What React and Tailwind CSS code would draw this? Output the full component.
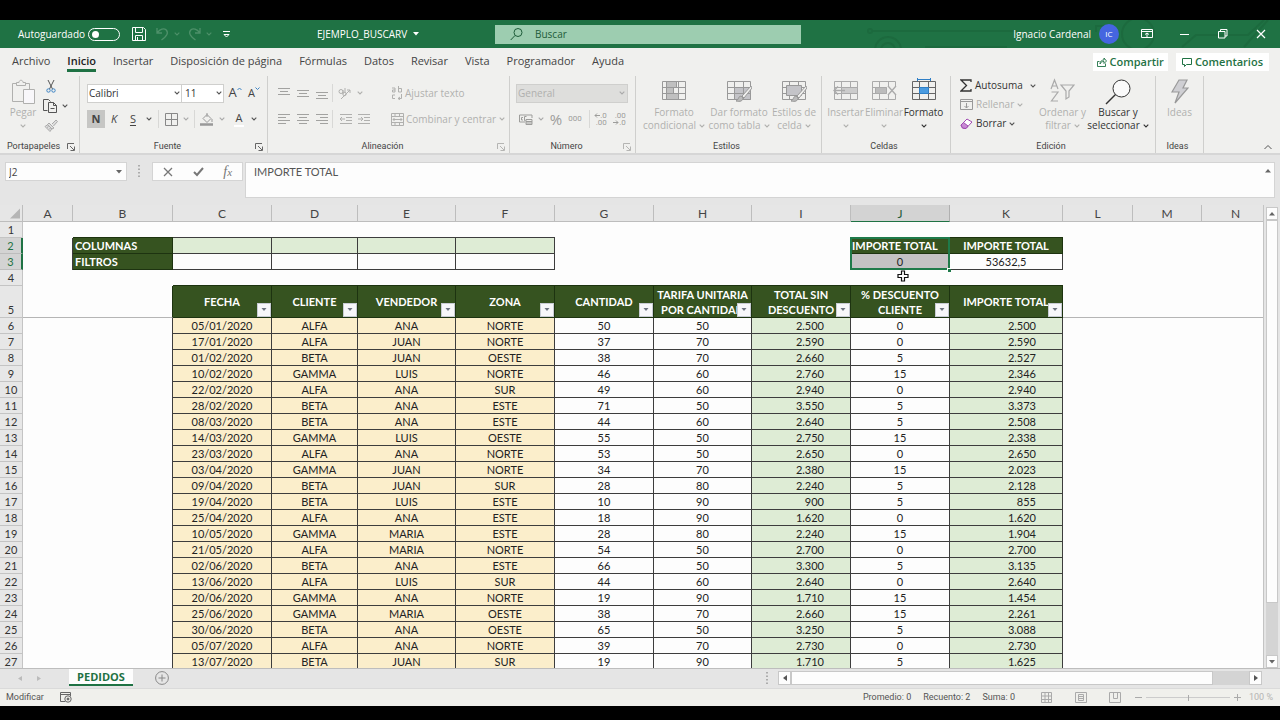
import React from 'react';

const HEADERS = [
  ['FECHA'],
  ['CLIENTE'],
  ['VENDEDOR'],
  ['ZONA'],
  ['CANTIDAD'],
  ['TARIFA UNITARIA', 'POR CANTIDAD'],
  ['TOTAL SIN', 'DESCUENTO'],
  ['% DESCUENTO', 'CLIENTE'],
  ['IMPORTE TOTAL'],
];

const ROWS = [
  ['05/01/2020', 'ALFA', 'ANA', 'NORTE', '50', '50', '2.500', '0', '2.500'],
  ['17/01/2020', 'ALFA', 'JUAN', 'NORTE', '37', '70', '2.590', '0', '2.590'],
  ['01/02/2020', 'BETA', 'JUAN', 'OESTE', '38', '70', '2.660', '5', '2.527'],
  ['10/02/2020', 'GAMMA', 'LUIS', 'NORTE', '46', '60', '2.760', '15', '2.346'],
  ['22/02/2020', 'ALFA', 'ANA', 'SUR', '49', '60', '2.940', '0', '2.940'],
  ['28/02/2020', 'BETA', 'ANA', 'ESTE', '71', '50', '3.550', '5', '3.373'],
  ['08/03/2020', 'BETA', 'ANA', 'ESTE', '44', '60', '2.640', '5', '2.508'],
  ['14/03/2020', 'GAMMA', 'LUIS', 'OESTE', '55', '50', '2.750', '15', '2.338'],
  ['23/03/2020', 'ALFA', 'ANA', 'NORTE', '53', '50', '2.650', '0', '2.650'],
  ['03/04/2020', 'GAMMA', 'JUAN', 'NORTE', '34', '70', '2.380', '15', '2.023'],
  ['09/04/2020', 'BETA', 'JUAN', 'SUR', '28', '80', '2.240', '5', '2.128'],
  ['19/04/2020', 'BETA', 'LUIS', 'ESTE', '10', '90', '900', '5', '855'],
  ['25/04/2020', 'ALFA', 'ANA', 'ESTE', '18', '90', '1.620', '0', '1.620'],
  ['10/05/2020', 'GAMMA', 'MARIA', 'ESTE', '28', '80', '2.240', '15', '1.904'],
  ['21/05/2020', 'ALFA', 'MARIA', 'NORTE', '54', '50', '2.700', '0', '2.700'],
  ['02/06/2020', 'BETA', 'ANA', 'ESTE', '66', '50', '3.300', '5', '3.135'],
  ['13/06/2020', 'ALFA', 'LUIS', 'SUR', '44', '60', '2.640', '0', '2.640'],
  ['20/06/2020', 'GAMMA', 'ANA', 'NORTE', '19', '90', '1.710', '15', '1.454'],
  ['25/06/2020', 'GAMMA', 'MARIA', 'OESTE', '38', '70', '2.660', '15', '2.261'],
  ['30/06/2020', 'BETA', 'ANA', 'OESTE', '65', '50', '3.250', '5', '3.088'],
  ['05/07/2020', 'ALFA', 'ANA', 'NORTE', '39', '70', '2.730', '0', '2.730'],
  ['13/07/2020', 'BETA', 'JUAN', 'SUR', '19', '90', '1.710', '5', '1.625'],
];

const COLUMN_STYLE = [
  'bg-[#fbeecb] text-center',
  'bg-[#fbeecb] text-center',
  'bg-[#fbeecb] text-center',
  'bg-[#fbeecb] text-center',
  'text-center',
  'text-center',
  'bg-[#deecd5] text-right pr-[26px]',
  'text-center',
  'bg-[#deecd5] text-right pr-[26px]',
];

function Chev({ className = 'text-[#555]' }) {
  return (
    <svg className={`inline-block h-[4px] w-[6px] shrink-0 ${className}`} viewBox="0 0 6 4" fill="none" stroke="currentColor" strokeWidth="1.1" aria-hidden="true">
      <path d="M.7.7 3 3 5.3.7" />
    </svg>
  );
}

function Caret({ className = 'text-[#666]', d = 'M0 0h6L3 3.5z' }) {
  return (
    <svg className={`h-[4px] w-[6px] shrink-0 ${className}`} viewBox="0 0 6 4" fill="currentColor" aria-hidden="true">
      <path d={d} />
    </svg>
  );
}

function Icon({ w, h, className = '', children, sw = 1 }) {
  return (
    <svg width={w} height={h} viewBox={`0 0 ${w} ${h}`} className={`shrink-0 ${className}`} fill="none" stroke="currentColor" strokeWidth={sw} aria-hidden="true">
      {children}
    </svg>
  );
}

function Launcher({ off }) {
  return (
    <button aria-label="Más opciones" className={off ? 'text-[#b5b5b3]' : 'text-[#666]'}>
      <Icon w={8} h={8}>
        <path d="M.5 6V.5H7M3 3l4 4M7.5 3.5v4h-4" />
      </Icon>
    </button>
  );
}

function Group({ label, launcher, off, className, children }) {
  return (
    <section aria-label={label} className={`flex shrink-0 flex-col border-r border-[#cfcfcd] ${className}`}>
      <div className="h-16">{children}</div>
      <div className="flex h-[13px] items-center pr-1">
        <span className="flex-1 text-center font-[Roboto,sans-serif] text-[9px] text-[#444]">{label}</span>
        {launcher && <Launcher off={off} />}
      </div>
    </section>
  );
}

function BigButton({ icon, lines, chevron = 'below', off = true, className = '' }) {
  const tone = off ? 'text-[#b0b0ae]' : 'text-[#333]';
  return (
    <button className={`flex flex-col items-center pt-[2px] text-[10px] leading-[13px] whitespace-nowrap ${tone} ${className}`}>
      <span className="flex h-7 items-start justify-center">{icon}</span>
      {lines.map((l, i) => (
        <span key={l} className="flex items-center gap-[3px]">
          {l}
          {chevron === 'inline' && i === lines.length - 1 && <Chev className={tone} />}
        </span>
      ))}
      {chevron === 'below' && (
        <span className="flex h-[13px] items-center">
          <Chev className={tone} />
        </span>
      )}
    </button>
  );
}

function Sep() {
  return <span className="h-[18px] w-px bg-[#d8d8d6]" />;
}

function Tool({ label, className = '', children }) {
  return (
    <button aria-label={label} className={`flex h-[18px] shrink-0 items-center justify-center ${className}`}>
      {children}
    </button>
  );
}

function Lines({ rows }) {
  return (
    <Icon w={13} h={13} className="text-[#a2a2a0]">
      {rows.map(([x, y, w]) => (
        <path key={y} d={`M${x} ${y}.5h${w}`} />
      ))}
    </Icon>
  );
}

function GridIcon({ children, className = '' }) {
  return (
    <Icon w={26} h={24} className={className}>
      <path d="M1.5 3.5h23v18h-23zM1.5 9.5h23M1.5 15.5h23M8.5 3.5v18M17.5 3.5v18" />
      {children}
    </Icon>
  );
}

function TitleBar() {
  return (
    <header className="relative flex h-7 shrink-0 items-center bg-[#1f7244] text-[10px] text-white">
      <svg className="absolute top-0 right-0 h-7 w-[420px] text-[#1c6a3e]" viewBox="0 0 420 28" fill="none" stroke="currentColor" strokeWidth="2" aria-hidden="true">
        <path d="M12 11h145M65 27h82M322 27l14-12h52l16-15M384 27l24-27M236 12v-6h14" />
        <circle cx="28" cy="30" r="13" />
        <circle cx="28" cy="30" r="7" />
        <circle cx="278" cy="14" r="16" />
        <circle cx="10" cy="11" r="2" />
      </svg>
      <div className="relative mr-3 flex flex-1 items-center pl-[18px]">
        <span className="w-[70px]">Autoguardado</span>
        <button role="switch" aria-checked="false" aria-label="Autoguardado" className="flex h-[13px] w-8 items-center rounded-full border border-white pl-[3px]">
          <span className="size-[7px] rounded-full bg-white" />
        </button>
        <button aria-label="Guardar" className="ml-3">
          <Icon w={14} h={14}>
            <path d="M.5.5h11l2 2v11H.5zM3.5.5v5h7v-5M3.5 13.5v-5h7v5M5.5 10v3.5" />
          </Icon>
        </button>
        <button aria-label="Deshacer" className="ml-[10px] flex items-center gap-[5px] text-[#4d9069]">
          <Icon w={13} h={14} sw={1.3}>
            <path d="M1 1v5h5M1.4 5.6C4 2 8 1 10 2.8c3 3 1 6-4.5 10.2" />
          </Icon>
          <Chev className="text-[#4d9069]" />
        </button>
        <button aria-label="Rehacer" className="ml-2 flex items-center gap-[5px] text-[#4d9069]">
          <Icon w={13} h={14} sw={1.3}>
            <path d="M12 1v5H7M11.6 5.6C9 2 5 1 3 2.8c-3 3-1 6 4.5 10.2" />
          </Icon>
          <Chev className="text-[#4d9069]" />
        </button>
        <button aria-label="Personalizar barra" className="ml-[11px]">
          <Icon w={7} h={7}>
            <path d="M0 .5h7M1 3.5h5L3.5 6z" />
          </Icon>
        </button>
        <button className="ml-[87px] flex items-center gap-[6px]">
          EJEMPLO_BUSCARV
          <Caret className="text-white" />
        </button>
      </div>
      <label className="relative flex h-[19px] w-[306px] items-center gap-3 bg-[#9dcdb0] pl-[15px] text-[#1d5c39]">
        <Icon w={13} h={13}>
          <circle cx="8" cy="4.5" r="4" />
          <path d="M5 7.5.7 12" />
        </Icon>
        <input aria-label="Buscar" placeholder="Buscar" className="w-full bg-transparent outline-none placeholder:text-[#1d5c39]" />
      </label>
      <div className="relative flex flex-1 items-center justify-end pr-[14px]">
        <span>Ignacio Cardenal</span>
        <span className="ml-2 flex size-5 items-center justify-center rounded-full bg-[#4565e0] text-[8px]">IC</span>
        <button aria-label="Opciones de la cinta" className="ml-[22px]">
          <Icon w={12} h={10}>
            <path d="M.5.5h11v8H.5zM.5 2.5h11M6 8V4M4 5.500 6 4l2 1.500" />
          </Icon>
        </button>
        <button aria-label="Minimizar" className="ml-[27px]">
          <Icon w={10} h={10}>
            <path d="M0 5.5h9" />
          </Icon>
        </button>
        <button aria-label="Restaurar" className="ml-7">
          <Icon w={10} h={10}>
            <path d="M.5 2.500h6.500V9H.5zM2.500 2.500V.5H9v6.500H7" />
          </Icon>
        </button>
        <button aria-label="Cerrar" className="ml-7">
          <Icon w={10} h={10} sw={1.2}>
            <path d="m1 1 8 8M9 1 1 9" />
          </Icon>
        </button>
      </div>
    </header>
  );
}

function TabBar() {
  const tabs = ['Archivo', 'Inicio', 'Insertar', 'Disposición de página', 'Fórmulas', 'Datos', 'Revisar', 'Vista', 'Programador', 'Ayuda'];
  return (
    <nav className="flex h-7 shrink-0 items-center bg-[#f0f0ee] pl-3 text-[11px] text-[#444]">
      <div className="flex flex-1 gap-[17px] self-stretch">
        {tabs.map((t) => (
          <a key={t} href="#" className={t === 'Inicio' ? 'mb-1 border-b-[3px] border-[#1f7244] pt-[5px] leading-4 font-semibold text-[#222]' : 'pt-[5px] leading-4'}>
            {t}
          </a>
        ))}
      </div>
      <div className="flex gap-2 pr-[11px] font-semibold text-[#1f7244]">
        <button className="flex h-[18px] items-center gap-[3px] bg-white px-1">
          <Icon w={10} h={10}>
            <path d="M2.5 4.500h-2v5h8v-3M3 7c0-3 2-4 4-4V1l2.500 3L7 6.500v-2C5 4.500 4 5 3 7z" strokeWidth=".9" />
          </Icon>
          Compartir
        </button>
        <button className="flex h-[18px] items-center gap-[3px] bg-white px-[6px]">
          <Icon w={10} h={10}>
            <path d="M.5 1.500h9v6h-5l-2 2v-2h-2z" />
          </Icon>
          Comentarios
        </button>
      </div>
    </nav>
  );
}

function Ribbon() {
  return (
    <div className="flex h-[77px] shrink-0 bg-[#f0f0ee]">
      <Group label="Portapapeles" launcher className="w-20">
        <div className="flex">
          <BigButton
            className="w-[42px] pl-1"
            lines={['Pegar']}
            icon={
              <Icon w={24} h={28}>
                <path d="M5 5.5H1.500v18H12M14 5.500h4.500V11M5.500 7.500v-3H8c0-3 4-3 4 0h2.500v3z" />
                <path d="M12.500 11.500h11v14h-11z" fill="#f8f7fa" />
              </Icon>
            }
          />
          <div className="flex flex-col gap-px pt-[2px] pl-px text-[#555]">
            <Tool label="Cortar" className="w-4">
              <Icon w={10} h={14}>
                <path d="m2 0 4.500 9M8 0 3.500 9" />
                <circle cx="2.500" cy="10.500" r="1.700" stroke="#3c83c4" />
                <circle cx="7.500" cy="10.500" r="1.700" stroke="#3c83c4" />
              </Icon>
            </Tool>
            <Tool label="Copiar" className="w-[25px] gap-[5px]">
              <Icon w={14} h={14}>
                <path d="M4.500 11.500h-4V.5h5l2 2M5.500 3.500h5l3 3v7h-8zM10.500 3.500v3h3M7.500 9.500h4" />
              </Icon>
              <Chev />
            </Tool>
            <Tool label="Copiar formato" className="w-4 text-[#aaa]">
              <Icon w={14} h={13}>
                <path d="m8 5 4-4 1.500 1.500L9.500 7M5 4l5 5-2 1-4.500-4.500zM4 5.500 1 7.500l5 5 2-3M3 8.500l1.500-1M5 10.500 6.500 9" fill="#ddd" />
              </Icon>
            </Tool>
          </div>
        </div>
      </Group>

      <Group label="Fuente" launcher className="w-[188px]">
        <div className="flex flex-col gap-2 pt-2 pl-[7px] text-[#444]">
          <div className="flex h-[18px] items-center text-[10px]">
            <span className="relative flex items-center">
              <select aria-label="Fuente" className="h-[19px] w-[95px] appearance-none border border-[#cfcfcd] bg-white pl-px text-[#333]">
                <option>Calibri</option>
              </select>
              <span className="pointer-events-none absolute right-[2px] flex"><Chev /></span>
            </span>
            <span className="relative flex items-center">
              <select aria-label="Tamaño de fuente" className="h-[19px] w-[42px] appearance-none border border-l-0 border-[#cfcfcd] bg-white pl-[3px] text-[#333]">
                <option>11</option>
              </select>
              <span className="pointer-events-none absolute right-[2px] flex"><Chev /></span>
            </span>
            <Tool label="Aumentar tamaño" className="ml-px w-5 text-[13px]">
              A<span className="mb-2"><Icon w={5} h={4} className="text-[#3c83c4]"><path d="m.5 3 2-2 2 2" /></Icon></span>
            </Tool>
            <Tool label="Disminuir tamaño" className="w-[18px] text-[11px]">
              A<span className="mb-2"><Icon w={5} h={4} className="text-[#3c83c4]"><path d="m.5.5 2 2 2-2" /></Icon></span>
            </Tool>
          </div>
          <div className="flex h-[18px] items-center text-[11px]">
            <Tool label="Negrita" className="w-[18px] bg-[#c6c6c4] font-bold">N</Tool>
            <Tool label="Cursiva" className="w-[18px] italic">K</Tool>
            <Tool label="Subrayado" className="w-5 underline underline-offset-2">S</Tool>
            <Tool label="Tipo de subrayado" className="w-[11px]"><Chev /></Tool>
            <span className="w-1" /><Sep />
            <Tool label="Bordes" className="ml-1 w-4">
              <Icon w={13} h={13} className="text-[#888]"><path d="M.5.5h12v12H.5zM6.500.5v12M.5 6.500h12" /></Icon>
            </Tool>
            <Tool label="Tipo de borde" className="w-[14px]"><Chev className="text-[#aaa]" /></Tool>
            <span className="w-px" /><Sep />
            <Tool label="Relleno" className="ml-1 w-4">
              <Icon w={14} h={13} className="text-[#999]"><path d="m3 5.500 4-4 4 4-4 4zM7 0v4M12 6v3" /><path d="M0 11.500h13" strokeWidth="2.500" /></Icon>
            </Tool>
            <Tool label="Color de relleno" className="w-[14px]"><Chev className="text-[#aaa]" /></Tool>
            <Tool label="Color de fuente" className="ml-[3px] w-[14px]"><span className="border-b-2 border-white px-[2px] leading-[14px]">A</span></Tool>
            <Tool label="Elegir color de fuente" className="w-4"><Chev /></Tool>
          </div>
        </div>
      </Group>

      <Group label="Alineación" launcher off className="w-[242px]">
        <div className="flex pt-2 pl-[7px] text-[10px] text-[#b0b0ae]">
          <div className="flex w-[116px] flex-col gap-2">
            <div className="flex h-[18px] items-center">
              <Tool label="Alinear arriba" className="w-[19px]"><Lines rows={[[0, 1, 12], [2, 4, 8], [0, 7, 12]]} /></Tool>
              <Tool label="Alinear en medio" className="w-[19px]"><Lines rows={[[0, 3, 12], [2, 6, 8], [0, 9, 12]]} /></Tool>
              <Tool label="Alinear abajo" className="w-[19px]"><Lines rows={[[0, 5, 12], [2, 8, 8], [0, 11, 12]]} /></Tool>
              <Sep />
              <Tool label="Orientación" className="w-[34px] gap-[5px]">
                <Icon w={14} h={13}><path d="m3 12 9-9M9 3h3v3" /><circle cx="3" cy="4.500" r="2" /><circle cx="6.500" cy="7" r="1.700" /><path d="M5 3v4M7 1v5" /></Icon>
                <Chev className="text-[#b0b0ae]" />
              </Tool>
            </div>
            <div className="flex h-[18px] items-center">
              <Tool label="Izquierda" className="w-[19px]"><Lines rows={[[0, 1, 12], [0, 4, 8], [0, 7, 12], [0, 10, 8]]} /></Tool>
              <Tool label="Centro" className="w-[19px]"><Lines rows={[[0, 1, 12], [2, 4, 8], [0, 7, 12], [2, 10, 8]]} /></Tool>
              <Tool label="Derecha" className="w-[19px]"><Lines rows={[[0, 1, 12], [4, 4, 8], [0, 7, 12], [4, 10, 8]]} /></Tool>
              <Sep />
              <Tool label="Disminuir sangría" className="ml-1 w-[18px]">
                <Icon w={12} h={12}><path d="M0 1.500h12M6 4.500h6M6 7.500h6M0 10.500h12M0 6h5M2 4 0 6l2 2" /></Icon>
              </Tool>
              <Tool label="Aumentar sangría" className="w-[18px]">
                <Icon w={12} h={12}><path d="M0 1.500h12M6 4.500h6M6 7.500h6M0 10.500h12M0 6h5M3 4l2 2-2 2" /></Icon>
              </Tool>
            </div>
          </div>
          <div className="flex flex-col gap-2">
            <button className="flex h-[18px] items-center gap-[2px]">
              <Icon w={12} h={14}><path d="M1 2h3v4H1.500V4H4M7.500 0v6h3V2.500h-3M4 9H1.500v3.500H4M7 12.500h3.500V8M9 11l-2 1.500L9 14" /></Icon>
              Ajustar texto
            </button>
            <button className="flex h-[18px] items-center gap-[2px] whitespace-nowrap">
              <Icon w={13} h={13}><path d="M.5.5h12v12H.5zM.5 3.500h12M.5 9.500h12M4 .5v3M8.500.5v3M4 9.500v3M8.500 9.500v3M2 6.500h9M3.500 5 2 6.500 3.500 8M9.500 5 11 6.500 9.500 8" /></Icon>
              Combinar y centrar
              <span className="ml-px flex"><Chev className="text-[#b0b0ae]" /></span>
            </button>
          </div>
        </div>
      </Group>

      <Group label="Número" launcher off className="w-[126px]">
        <div className="flex flex-col gap-2 pt-2 pl-[6px] text-[#b0b0ae]">
          <span className="relative flex h-[18px] w-[112px] items-center">
            <select disabled aria-label="Formato de número" className="h-[19px] w-full appearance-none border border-[#cfcfcd] bg-[#dededc] pl-px text-[10px] opacity-100">
              <option>General</option>
            </select>
            <span className="pointer-events-none absolute right-[3px] flex"><Chev className="text-[#aaa]" /></span>
          </span>
          <div className="flex h-[18px] items-center text-[#9d9d9b]">
            <Tool label="Formato de contabilidad" className="w-[30px] gap-[5px]">
              <Icon w={14} h={11}><path d="M13 4V1H.5v7H6M4 3.500H2.500v2.500H4M7.500 2.500h-2v4h1M7 5.500h6v5H7zM7 7.500h6M7 9h6" /></Icon>
              <Chev className="text-[#aaa]" />
            </Tool>
            <Tool label="Porcentaje" className="w-5 text-[15px]">%</Tool>
            <Tool label="Millares" className="w-[18px] font-[Roboto,sans-serif] text-[8px]">000</Tool>
            <span className="w-[5px]" /><Sep />
            <Tool label="Aumentar decimales" className="w-[21px] font-[Roboto,sans-serif] text-[8px] leading-[7px]">
              <span className="flex flex-col items-end">
                <span className="flex items-center"><Icon w={6} h={5}><path d="M6 2.500H1M3 .5l-2 2 2 2" /></Icon>.0</span>
                <span>.00</span>
              </span>
            </Tool>
            <Tool label="Disminuir decimales" className="w-[17px] font-[Roboto,sans-serif] text-[8px] leading-[7px]">
              <span className="flex flex-col items-end">
                <span>.00</span>
                <span className="flex items-center"><Icon w={6} h={5}><path d="M0 2.500h5M3 .5l2 2-2 2" /></Icon>.0</span>
              </span>
            </Tool>
          </div>
        </div>
      </Group>

      <Group label="Estilos" className="w-[186px]">
        <div className="flex">
          <BigButton
            className="w-[72px] pl-1"
            chevron="inline"
            lines={['Formato', 'condicional']}
            icon={<GridIcon className="text-[#999]"><path d="M5.500 3.500h10v6h-10zM5.500 9.500h7v6h-7zM5.500 15.500h12v6h-12z" fill="#c0c0c0" /></GridIcon>}
          />
          <BigButton
            className="w-[62px]"
            chevron="inline"
            lines={['Dar formato', 'como tabla']}
            icon={<GridIcon className="text-[#999]"><path d="M8.500 9.500h16v12h-16z" fill="#c4c4c8" /><path d="M8.500 15.500h16M17.500 9.500v12" /><path d="m25 8-9 10 2 2 8-10z" fill="#f0f0ee" /><path d="M15 18c-3 0-2 4-5 5 4 1 7 0 7-3z" fill="#bbb" /></GridIcon>}
          />
          <BigButton
            className="w-12"
            chevron="inline"
            lines={['Estilos de', 'celda']}
            icon={<GridIcon className="text-[#999]"><path d="M5.500 7.500h15v10h-15z" fill="#c4c4c8" /><path d="m25 8-9 10 2 2 8-10z" fill="#f0f0ee" /><path d="M15 18c-3 0-2 4-5 5 4 1 7 0 7-3z" fill="#bbb" /></GridIcon>}
          />
        </div>
      </Group>

      <Group label="Celdas" className="w-[129px]">
        <div className="flex pl-1">
          <BigButton
            className="w-[39px]"
            lines={['Insertar']}
            icon={<GridIcon className="text-[#aaa]"><path d="M8.500 9.500h16v6h-16z" fill="#ccc" /><path d="M12 12.500H1M5 8.500l-4 4 4 4" strokeWidth="1.300" /></GridIcon>}
          />
          <BigButton
            className="w-[38px]"
            lines={['Eliminar']}
            icon={<GridIcon className="text-[#aaa]"><path d="M15.500 8.500h10v8h-10z" fill="#f0f0ee" stroke="none" /><path d="M4.500 9.500h11v6h-11z" fill="#bbb" /><path d="m17 8 8 9M25 8l-8 9" strokeWidth="1.300" /></GridIcon>}
          />
          <BigButton
            className="w-[41px]"
            off={false}
            lines={['Formato']}
            icon={<GridIcon className="text-[#666]"><path d="M8.500 9.500h9v6h-9z" fill="#4a9be0" stroke="#2f7fc6" /><path d="M6.500 1.500h13M6.500 0v3M19.500 0v3" stroke="#2f7fc6" /></GridIcon>}
          />
        </div>
      </Group>

      <Group label="Edición" className="w-[205px]">
        <div className="flex pl-[9px] text-[10px]">
          <div className="w-[77px] whitespace-nowrap">
            <button className="flex h-[19px] w-full items-center gap-[3px] text-[#333]">
              <Icon w={12} h={13} sw={1.3}><path d="M11 3V1H1l5.500 5.500L1 12h10v-2" /></Icon>
              Autosuma <span className="ml-1 flex"><Chev /></span>
            </button>
            <button className="flex h-[19px] items-center gap-[3px] text-[#b0b0ae]">
              <Icon w={13} h={12} className="text-[#999]"><path d="M.5.5h12v10H.5zM.5 2.500h12M6.500 4v5M4.500 7l2 2 2-2" /></Icon>
              Rellenar <Chev className="text-[#b0b0ae]" />
            </button>
            <button className="flex h-[19px] items-center gap-[3px] text-[#333]">
              <Icon w={13} h={12} className="text-[#a04ab0]"><path d="m1 7 6-6 5 3-6 6.500-3.500-.5z" fill="#fff" /><path d="m1 7 2.500-2.500L8 8l-2 2.500-3.500-.5z" fill="#c88bd4" /></Icon>
              Borrar <Chev />
            </button>
          </div>
          <BigButton
            className="w-[51px]"
            chevron="inline"
            lines={['Ordenar y', 'filtrar']}
            icon={<Icon w={25} h={25} className="text-[#aaa]" sw={1.2}><path d="m1 11 3.500-9L8 11M2.500 8h4M1.500 14H8l-6.500 9H8M11 7h13l-5 6v6l-3 2v-8z" /></Icon>}
          />
          <BigButton
            className="w-[60px]"
            off={false}
            chevron="inline"
            lines={['Buscar y', 'seleccionar']}
            icon={<Icon w={26} h={27}><circle cx="16.500" cy="10.500" r="8.500" fill="#fafafa" /><path d="M10.500 16.500 1 26" strokeWidth="1.400" /></Icon>}
          />
        </div>
      </Group>

      <Group label="Ideas" className="w-12">
        <BigButton
          className="w-full"
          chevron="none"
          lines={['Ideas']}
          icon={<Icon w={18} h={26} className="text-[#999]" sw={1.2}><path d="M8 2h8l-4 8h5L4 25l4-11H1z" fill="#cfcfd3" /></Icon>}
        />
      </Group>

      <div className="flex flex-1 items-end justify-end pr-2 pb-[3px]">
        <button aria-label="Contraer la cinta" className="flex">
          <Icon w={8} h={6}><path d="m.5 5 3.500-3.500L7.500 5" stroke="#555" /></Icon>
        </button>
      </div>
    </div>
  );
}

function FormulaBar() {
  return (
    <div className="flex h-[52px] shrink-0 items-start border-t-2 border-[#d6d6d6] bg-[#e5e5e5] pt-[7px] pr-[5px] pl-[5px] text-[#444]">
      <span className="relative flex w-[122px] items-center">
        <input aria-label="Cuadro de nombres" defaultValue="J2" className="h-[19px] w-full border border-[#d4d4d4] bg-[#fdfdfd] pl-[3px] text-[10px] outline-none" />
        <span className="absolute right-[5px] flex"><Caret /></span>
      </span>
      <Icon w={2} h={12} className="mt-[3px] ml-[11px] text-[#999]"><path d="M1 0v12" strokeWidth="1.500" strokeDasharray="1.500 2" /></Icon>
      <div className="ml-3 flex h-[19px] w-[91px] items-center justify-around border border-[#d4d4d4] bg-[#fdfdfd] text-[#777]">
        <button aria-label="Cancelar"><Icon w={10} h={10} sw={1.3}><path d="m1 1 8 8M9 1 1 9" /></Icon></button>
        <button aria-label="Introducir"><Icon w={11} h={10} sw={2}><path d="m1 5 3 3 6-7" /></Icon></button>
        <button aria-label="Insertar función" className="font-['Liberation_Serif',serif] text-[14px] leading-4 italic">f<span className="text-[11px]">x</span></button>
      </div>
      <label className="ml-[2px] flex h-9 flex-1 items-start border border-[#d4d4d4] bg-[#fdfdfd] pt-px pr-[3px] pl-2">
        <input aria-label="Barra de fórmulas" defaultValue="IMPORTE TOTAL" className="h-4 flex-1 bg-transparent font-[Lato,sans-serif] text-[11px] text-[#555] outline-none" />
        <span className="mt-[5px] flex"><Caret d="M0 3.500h6L3 0z" /></span>
      </label>
    </div>
  );
}

function FilterButton({ name }) {
  return (
    <button aria-label={`Filtrar ${name}`} className="absolute right-0 bottom-0 flex h-[14px] w-[14px] items-center justify-center border border-[#c8ccd4] bg-[#f7f7fa]">
      <Caret className="text-[#6d7480]" d="M.5 0h5L3 3z" />
    </button>
  );
}

function RowHead({ n, selected, tall }) {
  return (
    <th
      scope="row"
      className={`text-center font-normal ${tall ? 'align-bottom' : ''} ${
        selected ? 'border-r-2 border-b border-r-[#1f7244] border-b-[#bdbdbd] bg-[#d3d3d3] text-[#1f7244]' : 'border-r border-b border-[#c4c4c4] bg-[#e7e7e7] text-[#333]'
      }`}
    >
      {n}
    </th>
  );
}

function Sheet() {
  const letters = ['A', 'B', 'C', 'D', 'E', 'F', 'G', 'H', 'I', 'J', 'K', 'L', 'M', 'N'];
  const dark = 'border-r border-b border-[#1d3310] bg-[#365320] font-bold text-white';
  const boxed = 'border-r border-b border-[#3d3d3d]';
  return (
    <table className="w-[calc(100%+7px)] table-fixed border-separate border-spacing-0 font-[Lato,sans-serif] text-[11px] leading-[15px] text-[#222]">
      <colgroup>
        <col className="w-[23px]" />
        <col className="w-[50px]" />
        <col className="w-[100px]" />
        <col className="w-[99px]" />
        <col className="w-[86px]" />
        <col className="w-[98px]" />
        <col className="w-[99px]" />
        <col className="w-[99px]" />
        <col className="w-[98px]" />
        <col className="w-[99px]" />
        <col className="w-[99px]" />
        <col className="w-[113px]" />
        <col className="w-[70px]" />
        <col className="w-[69px]" />
        <col />
      </colgroup>
      <thead>
        <tr className="h-[17px] bg-[#e6e6e6] text-[12px] text-[#444]">
          <td className="border-r border-b border-[#bdbdbd]">
            <svg className="ml-auto h-[11px] w-[12px] pr-[2px]" viewBox="0 0 10 10" aria-hidden="true"><path d="M10 0v10H0z" fill="#b5b5b5" /></svg>
          </td>
          {letters.map((l) => (
            <th
              key={l}
              scope="col"
              className={`border-r border-b font-normal ${l === 'J' ? 'border-r-[#b0b0b0] border-b-[#1f7244] bg-[#d3d3d3] text-[#1f5c3c]' : 'border-[#bdbdbd]'}`}
            >
              {l}
            </th>
          ))}
        </tr>
      </thead>
      <tbody>
        <tr className="h-4">
          <RowHead n={1} />
          <td />
          <td className="border-b border-[#1d3310]" />
          <td colSpan={4} className="border-b border-[#3d3d3d]" />
          <td colSpan={3} />
          <td colSpan={2} className="border-b border-[#1d3310]" />
          <td colSpan={3} />
        </tr>
        <tr className="h-4">
          <RowHead n={2} selected />
          <td className="border-r border-[#3d3d3d]" />
          <td className={`${dark} pl-[2px]`}>COLUMNAS</td>
          <td className={`${boxed} bg-[#deecd5]`} />
          <td className={`${boxed} bg-[#deecd5]`} />
          <td className={`${boxed} bg-[#deecd5]`} />
          <td className={`${boxed} bg-[#deecd5]`} />
          <td colSpan={2} />
          <td className="border-r border-[#3d3d3d]" />
          <td className={`${dark} relative pl-px`}>
            IMPORTE TOTAL
            <span className="pointer-events-none absolute -top-px -left-px z-10 h-[33px] w-[100px] border-2 border-[#1f7a4a]" />
            <span className="absolute top-[30px] -right-[2px] z-20 size-1 border-t border-l border-white bg-[#1f7a4a]" />
          </td>
          <td className={`${dark} text-center`}>IMPORTE TOTAL</td>
          <td colSpan={3} />
        </tr>
        <tr className="h-4">
          <RowHead n={3} selected />
          <td className="border-r border-[#3d3d3d]" />
          <td className={`${dark} pl-[2px]`}>FILTROS</td>
          <td className={boxed} />
          <td className={boxed} />
          <td className={boxed} />
          <td className={boxed} />
          <td colSpan={2} />
          <td className="border-r border-[#3d3d3d]" />
          <td className={`${boxed} bg-[#c4c2c4] text-center`}>0</td>
          <td className={`${boxed} text-center`}>53632,5</td>
          <td colSpan={3} />
        </tr>
        <tr className="h-4">
          <RowHead n={4} />
          <td colSpan={2} />
          <td colSpan={7} className="border-b border-[#1d3310]" />
          <td className="relative border-b border-[#1d3310]">
            <svg className="absolute top-0 left-[46px] size-3" viewBox="0 0 12 12" aria-hidden="true">
              <path d="M4.500 1h3v3.500H11v3H7.500V11h-3V7.500H1v-3h3.500z" fill="#fff" stroke="#111" strokeWidth="1.200" />
            </svg>
          </td>
          <td className="border-b border-[#1d3310]" />
          <td colSpan={3} />
        </tr>
        <tr className="h-8">
          <RowHead n={5} tall />
          <td className="border-b border-[#b5b5b5]" />
          <td className="border-r border-b border-r-[#1d3310] border-b-[#b5b5b5]" />
          {HEADERS.map((lines, i) => (
            <th key={i} scope="col" className={`${dark} relative whitespace-nowrap`}>
              {lines.map((l) => (
                <span key={l} className="block">{l}</span>
              ))}
              <FilterButton name={lines.join(' ')} />
            </th>
          ))}
          <td colSpan={3} className="border-b border-[#b5b5b5]" />
        </tr>
        {ROWS.map((row, r) => (
          <tr key={row[0]} className="h-4">
            <RowHead n={r + 6} />
            <td />
            <td className="border-r border-[#3d3d3d]" />
            {row.map((v, c) => (
              <td key={c} className={`${boxed} ${COLUMN_STYLE[c]}`}>{v}</td>
            ))}
            <td colSpan={3} />
          </tr>
        ))}
      </tbody>
    </table>
  );
}

function VerticalScroll() {
  return (
    <div className="flex w-[17px] flex-col border-l border-[#c4c4c4] bg-[#e5e5e5] pt-[2px] pr-[2px] pl-[2px]">
      <button aria-label="Subir" className="flex h-[13px] shrink-0 items-center justify-center border border-[#c8c8c8] bg-[#fdfdfd]"><Caret d="M0 3.500h6L3 0z" /></button>
      <div className="flex flex-1 flex-col bg-[#d4d4d4]">
        <div className="h-[88%] border border-[#c8c8c8] bg-[#fdfdfd]" />
      </div>
      <button aria-label="Bajar" className="flex h-[13px] shrink-0 items-center justify-center border border-[#c8c8c8] bg-[#fdfdfd]"><Caret /></button>
    </div>
  );
}

function SheetTabs() {
  return (
    <div className="flex h-5 shrink-0 items-start border-t border-[#bdbdbd] bg-[#e5e5e5]">
      <div className="flex w-[69px] items-center gap-[15px] self-stretch pl-[18px] text-[#bbb]">
        <svg className="h-[5px] w-1" viewBox="0 0 4 5" fill="currentColor" aria-hidden="true"><path d="M4 0v5L0 2.500z" /></svg>
        <svg className="h-[5px] w-1" viewBox="0 0 4 5" fill="currentColor" aria-hidden="true"><path d="M0 0v5l4-2.500z" /></svg>
      </div>
      <button className="h-[17px] w-16 border-b-2 border-[#1f7244] bg-[#fdfdfd] text-[11px] leading-[13px] font-bold text-[#1f7244]">PEDIDOS</button>
      <button aria-label="Hoja nueva" className="mt-[2px] ml-[22px] text-[#888]">
        <Icon w={14} h={14}><circle cx="7" cy="7" r="6.400" /><path d="M7 3.500v7M3.500 7h7" /></Icon>
      </button>
      <div className="flex-1" />
      <Icon w={2} h={12} className="mt-[3px] text-[#999]"><path d="M1 0v12" strokeWidth="1.500" strokeDasharray="1.500 2" /></Icon>
      <div className="mt-[2px] mr-[18px] ml-[10px] flex h-[14px] w-[484px] bg-[#d4d4d4]">
        <button aria-label="Izquierda" className="flex w-[13px] items-center justify-center border border-[#c8c8c8] bg-[#fdfdfd]">
          <svg className="h-[6px] w-1" viewBox="0 0 4 6" fill="#555" aria-hidden="true"><path d="M4 0v6L0 3z" /></svg>
        </button>
        <div className="w-[422px] border border-[#c8c8c8] bg-[#fdfdfd]" />
        <button aria-label="Derecha" className="ml-auto flex w-[13px] items-center justify-center border border-[#c8c8c8] bg-[#fdfdfd]">
          <svg className="h-[6px] w-1" viewBox="0 0 4 6" fill="#555" aria-hidden="true"><path d="M0 0v6l4-3z" /></svg>
        </button>
      </div>
    </div>
  );
}

function StatusBar() {
  return (
    <footer className="flex h-[18px] shrink-0 items-center border-t border-[#dadada] bg-[#f0f0ec] pr-[7px] pl-[6px] font-[Roboto,sans-serif] text-[9px] text-[#555]">
      <span>Modificar</span>
      <button aria-label="Grabar macro" className="ml-4 text-[#666]">
        <Icon w={12} h={11}><path d="M5 9.500H.5v-9h10V4M.5 2.500h10" /><circle cx="8" cy="7" r="3.200" /><circle cx="8" cy="7" r="1" fill="currentColor" /></Icon>
      </button>
      <div className="flex-1" />
      <div className="flex gap-3"><span>Promedio: 0</span><span>Recuento: 2</span><span>Suma: 0</span></div>
      <div className="ml-[26px] flex w-20 items-center justify-between text-[#aaa]">
        <button aria-label="Normal"><Icon w={12} h={11}><path d="M.5.5h10v10H.5zM4 .5v10M7.500.5v10M.5 4h10M.5 7.500h10" /></Icon></button>
        <button aria-label="Diseño de página"><Icon w={12} h={11}><path d="M.5.5h11v10H.5zM3.500 2.500h5v6h-5zM4 4.500h4M4 6.500h4" /></Icon></button>
        <button aria-label="Salto de página"><Icon w={12} h={11}><path d="M.5.5h11v10H.5zM4.500.5v6h4v-6" /></Icon></button>
      </div>
      <button aria-label="Alejar" className="ml-[14px] text-[#aaa]"><Icon w={7} h={7}><path d="M0 3.500h7" /></Icon></button>
      <input
        type="range"
        aria-label="Zoom"
        defaultValue="50"
        className="mx-1 h-[6px] w-[84px] appearance-none bg-transparent bg-[linear-gradient(#ccc,#ccc)] bg-[length:100%_1px] bg-center bg-no-repeat [&::-webkit-slider-thumb]:h-[6px] [&::-webkit-slider-thumb]:w-px [&::-webkit-slider-thumb]:appearance-none [&::-webkit-slider-thumb]:bg-[#aaa]"
      />
      <button aria-label="Acercar" className="text-[#aaa]"><Icon w={7} h={7}><path d="M0 3.500h7M3.500 0v7" /></Icon></button>
      <span className="ml-2 text-[#b5b5b3]">100 %</span>
    </footer>
  );
}

export default function App() {
  return (
    <div className="flex h-screen flex-col overflow-hidden bg-black pt-5 pb-[14px] font-['Open_Sans',sans-serif]">
      <TitleBar />
      <TabBar />
      <Ribbon />
      <FormulaBar />
      <main className="flex min-h-0 flex-1 bg-[#fdfdfd]">
        <div className="min-w-0 flex-1 overflow-hidden">
          <Sheet />
        </div>
        <VerticalScroll />
      </main>
      <SheetTabs />
      <StatusBar />
    </div>
  );
}
